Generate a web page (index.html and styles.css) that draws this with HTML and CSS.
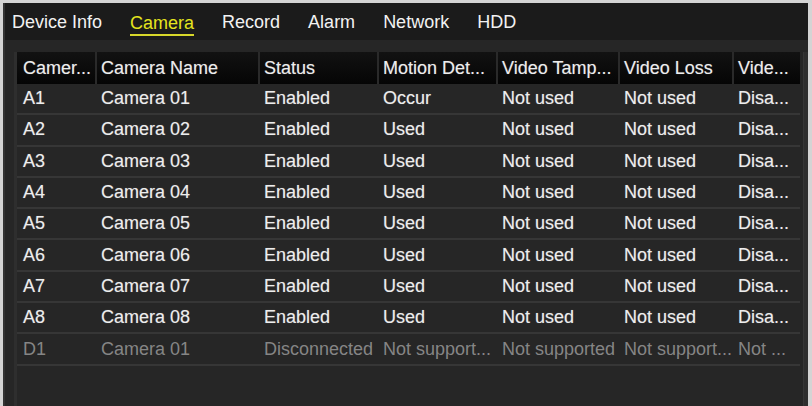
FILE: index.html
```html
<!DOCTYPE html>
<html>
<head>
<meta charset="utf-8">
<link rel="stylesheet" href="styles.css">
</head>
<body>
<div class="frame">
  <div class="tabs">
    <span class="tab">Device Info</span>
    <span class="tab active">Camera</span>
    <span class="tab">Record</span>
    <span class="tab">Alarm</span>
    <span class="tab">Network</span>
    <span class="tab">HDD</span>
  </div>
  <div class="content">
    <div class="table">
      <div class="row head">
        <div class="cell">Camer...</div>
        <div class="cell">Camera Name</div>
        <div class="cell">Status</div>
        <div class="cell">Motion Det...</div>
        <div class="cell">Video Tamp...</div>
        <div class="cell">Video Loss</div>
        <div class="cell">Vide...</div>
      </div>
      <div class="row"><div class="cell">A1</div><div class="cell">Camera 01</div><div class="cell">Enabled</div><div class="cell">Occur</div><div class="cell">Not used</div><div class="cell">Not used</div><div class="cell">Disa...</div></div>
      <div class="row"><div class="cell">A2</div><div class="cell">Camera 02</div><div class="cell">Enabled</div><div class="cell">Used</div><div class="cell">Not used</div><div class="cell">Not used</div><div class="cell">Disa...</div></div>
      <div class="row"><div class="cell">A3</div><div class="cell">Camera 03</div><div class="cell">Enabled</div><div class="cell">Used</div><div class="cell">Not used</div><div class="cell">Not used</div><div class="cell">Disa...</div></div>
      <div class="row"><div class="cell">A4</div><div class="cell">Camera 04</div><div class="cell">Enabled</div><div class="cell">Used</div><div class="cell">Not used</div><div class="cell">Not used</div><div class="cell">Disa...</div></div>
      <div class="row"><div class="cell">A5</div><div class="cell">Camera 05</div><div class="cell">Enabled</div><div class="cell">Used</div><div class="cell">Not used</div><div class="cell">Not used</div><div class="cell">Disa...</div></div>
      <div class="row"><div class="cell">A6</div><div class="cell">Camera 06</div><div class="cell">Enabled</div><div class="cell">Used</div><div class="cell">Not used</div><div class="cell">Not used</div><div class="cell">Disa...</div></div>
      <div class="row"><div class="cell">A7</div><div class="cell">Camera 07</div><div class="cell">Enabled</div><div class="cell">Used</div><div class="cell">Not used</div><div class="cell">Not used</div><div class="cell">Disa...</div></div>
      <div class="row"><div class="cell">A8</div><div class="cell">Camera 08</div><div class="cell">Enabled</div><div class="cell">Used</div><div class="cell">Not used</div><div class="cell">Not used</div><div class="cell">Disa...</div></div>
      <div class="row disabled"><div class="cell">D1</div><div class="cell">Camera 01</div><div class="cell">Disconnected</div><div class="cell">Not support...</div><div class="cell">Not supported</div><div class="cell">Not support...</div><div class="cell">Not ...</div></div>
    </div>
    <div class="scroll"></div>
  </div>
</div>
</body>
</html>
```
FILE: styles.css
```css
html, body {
  margin: 0;
  padding: 0;
}
body {
  background: #d4d4d4;
  width: 812px;
  height: 406px;
  overflow: hidden;
  font-family: "Liberation Sans", Arial, sans-serif;
  font-size: 18px;
  color: #ededed;
}
.frame {
  margin: 3px 4px 0 3px;
  height: 403px;
  background: #262626;
  border-left: 2px solid #333;
  display: flex;
  flex-direction: column;
}
.tabs {
  height: 37px;
  background: #1b1b1b;
  display: flex;
  align-items: center;
  gap: 28px;
  padding-left: 7px;
  flex: none;
}
.tab {
  color: #f2f2f2;
  line-height: 20px;
  padding-top: 1px;
}
.tab.active {
  color: #e4e41e;
  border-bottom: 2px solid #d6d62a;
  padding-bottom: 1px;
  margin-bottom: -4px;
}
.content {
  flex: 1;
  display: flex;
  padding: 12px 0 0 9px;
  gap: 0;
}
.table {
  width: 783px;
  border-left: 3px solid #2e2e2e;
  padding-left: 0;
  display: flex;
  flex-direction: column;
}
.scroll {
  width: 4px;
  margin-left: 3px;
  background: #2e2e2e;
  border-left: 1px solid #363636;
}
.row {
  display: grid;
  grid-template-columns: 78px 163px 119px 119px 122px 114px 65px;
  height: 31.3px;
  box-sizing: border-box;
  border-bottom: 2px solid #363636;
  align-items: center;
}
.row.head {
  height: 32px;
  border-bottom: none;
  background: linear-gradient(#121212, #050505);
}
.row.head .cell {
  height: 100%;
  display: flex;
  align-items: center;
  border-left: 2px solid #2a2a2a;
  box-sizing: border-box;
  padding-left: 4px;
}
.row.head .cell:first-child {
  border-left: none;
  padding-left: 6px;
}
.cell {
  padding-left: 6px;
  white-space: nowrap;
  overflow: hidden;
  text-shadow: 0 0 1px rgba(255,255,255,0.35);
}
.row.disabled {
  color: #858585;
}
.row.disabled .cell {
  text-shadow: none;
}
```
